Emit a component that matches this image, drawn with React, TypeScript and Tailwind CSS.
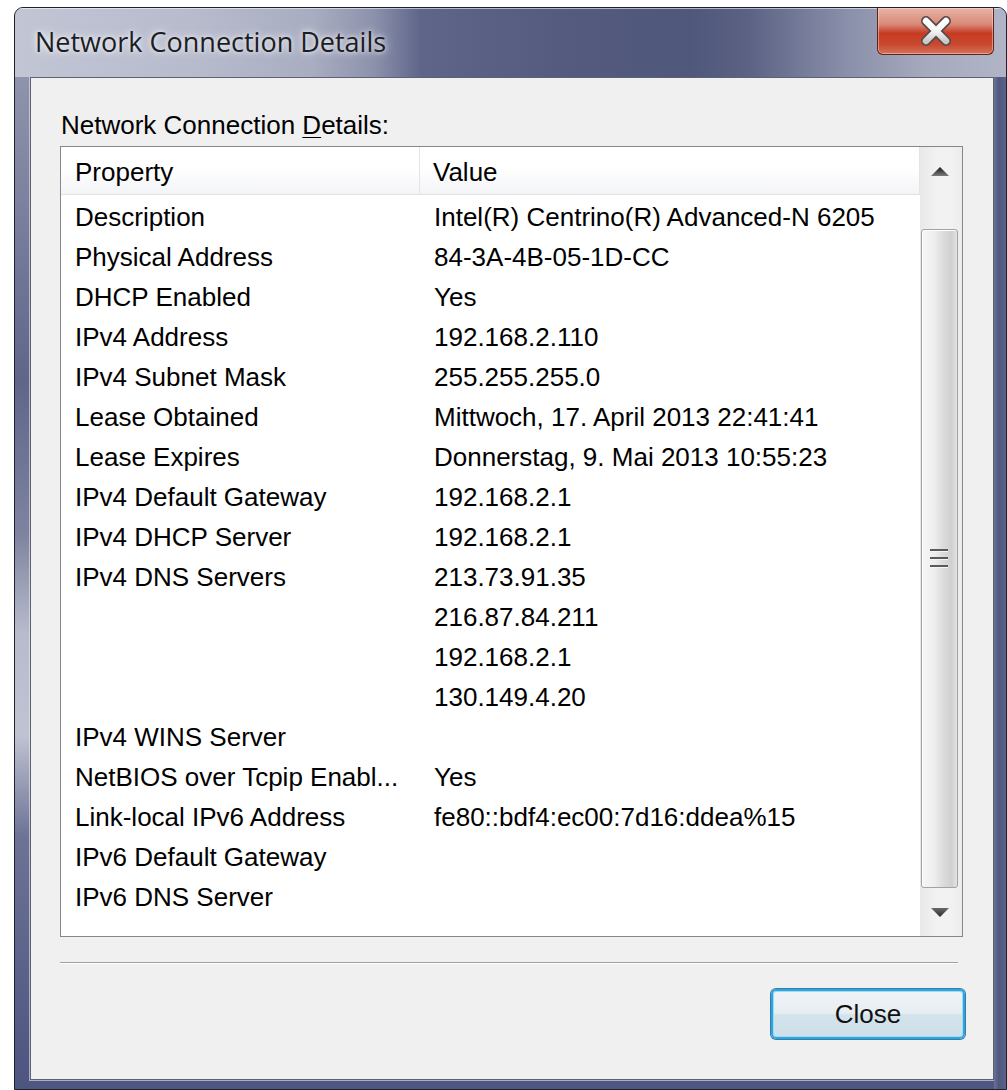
import React from "react";

const rows: [string, string][] = [
  ["Description", "Intel(R) Centrino(R) Advanced-N 6205"],
  ["Physical Address", "84-3A-4B-05-1D-CC"],
  ["DHCP Enabled", "Yes"],
  ["IPv4 Address", "192.168.2.110"],
  ["IPv4 Subnet Mask", "255.255.255.0"],
  ["Lease Obtained", "Mittwoch, 17. April 2013 22:41:41"],
  ["Lease Expires", "Donnerstag, 9. Mai 2013 10:55:23"],
  ["IPv4 Default Gateway", "192.168.2.1"],
  ["IPv4 DHCP Server", "192.168.2.1"],
  ["IPv4 DNS Servers", "213.73.91.35"],
  ["", "216.87.84.211"],
  ["", "192.168.2.1"],
  ["", "130.149.4.20"],
  ["IPv4 WINS Server", ""],
  ["NetBIOS over Tcpip Enabl...", "Yes"],
  ["Link-local IPv6 Address", "fe80::bdf4:ec00:7d16:ddea%15"],
  ["IPv6 Default Gateway", ""],
  ["IPv6 DNS Server", ""],
];

function CloseGlyph() {
  return (
    <svg width="34" height="30" viewBox="0 0 34 30">
      <defs>
        <linearGradient id="xg" x1="0" y1="0" x2="0" y2="1">
          <stop offset="0" stopColor="#ffffff" />
          <stop offset="0.55" stopColor="#f2f2f2" />
          <stop offset="1" stopColor="#c9c9c9" />
        </linearGradient>
      </defs>
      <path d="M7 5 L27 25 M27 5 L7 25" stroke="#5a4a48" strokeWidth="10" strokeLinecap="round" />
      <path d="M7 5 L27 25 M27 5 L7 25" stroke="url(#xg)" strokeWidth="6.5" strokeLinecap="round" />
    </svg>
  );
}

function Arrow({ up }: { up: boolean }) {
  return (
    <svg width="18" height="9" viewBox="0 0 18 9">
      <defs>
        <linearGradient id={up ? "au" : "ad"} x1="0" y1="0" x2="0" y2="1">
          <stop offset="0" stopColor={up ? "#1a1a1a" : "#6a6a6a"} />
          <stop offset="1" stopColor={up ? "#7a7a7a" : "#2a2a2a"} />
        </linearGradient>
      </defs>
      {up ? (
        <polygon points="9,0 18,9 0,9" fill="url(#au)" />
      ) : (
        <polygon points="0,0 18,0 9,9" fill="url(#ad)" />
      )}
    </svg>
  );
}

function ScrollBar() {
  return (
    <div className="flex w-[42px] flex-col bg-[linear-gradient(to_right,#e8e8e8,#f2f2f2_40%,#f2f2f2_70%,#ececec)]">
      <div className="flex h-[48px] items-center justify-center pr-[2px]">
        <Arrow up />
      </div>
      <div className="flex flex-1 flex-col pt-[34px] pl-[1px]">
        <div className="flex flex-1 w-[37px] items-center justify-center rounded-[3px] border border-[#a3a3a3] bg-[linear-gradient(to_right,#f6f6f6,#eeeeee_35%,#dcdcdc_60%,#d0d0d0_85%,#e4e4e4)] shadow-[inset_1px_1px_0_#ffffff]">
          <div className="flex flex-col gap-[5px] pr-[2px]">
            <div className="h-[3px] w-[18px] border-t-2 border-[#5a5a5a] bg-[#f4f4f4]" />
            <div className="h-[3px] w-[18px] border-t-2 border-[#5a5a5a] bg-[#f4f4f4]" />
            <div className="h-[3px] w-[18px] border-t-2 border-[#5a5a5a] bg-[#f4f4f4]" />
          </div>
        </div>
      </div>
      <div className="flex h-[48px] items-center justify-center pr-[2px]">
        <Arrow up={false} />
      </div>
    </div>
  );
}

function DetailsList() {
  return (
    <div className="flex h-[791px] w-[903px] border border-[#828790] bg-white font-['Liberation_Sans',Arial,sans-serif] text-[26px] text-black">
      <div className="flex flex-1 flex-col">
        <div className="flex h-[48px] border-b border-[#e2e3e5] bg-[linear-gradient(to_bottom,#ffffff,#ffffff_45%,#f3f4f6)]">
          <div className="w-[359px] border-r border-[#e3e4e6] pl-[14px] pt-[10px] leading-[30px]">Property</div>
          <div className="flex-1 border-r border-[#e3e4e6] pl-[13px] pt-[10px] leading-[30px]">Value</div>
        </div>
        <div className="flex flex-col pt-[2px]">
          {rows.map(([k, v], i) => (
            <div key={i} className="flex h-[40px] leading-[40px]">
              <div className="w-[359px] whitespace-nowrap pl-[14px]">{k}</div>
              <div className="flex-1 whitespace-nowrap pl-[14px]">{v}</div>
            </div>
          ))}
        </div>
      </div>
      <ScrollBar />
    </div>
  );
}

export default function App() {
  return (
    <div className="h-[1090px] w-[1007px] overflow-hidden bg-white pl-[14px] pt-[7px]">
      <div className="flex h-[1083px] w-[993px] flex-col overflow-hidden rounded-t-[9px] border border-[#1d2130] bg-[#4f5780]">
        {/* caption */}
        <div className="relative flex h-[69px] shrink-0 bg-[linear-gradient(to_right,#c2c5d4_0%,#b7bbcc_18%,#a9adc1_30%,#8e93ad_36%,#5e6588_41%,#545b7e_55%,#4f577a_68%,#5b6284_74%,#8a90aa_84%,#a6aabe_92%,#b0b4c6_100%)] shadow-[inset_0_1px_0_rgba(255,255,255,0.55)]">
          <div className="pl-[20px] pt-[17px] font-['Open_Sans','Noto_Sans',sans-serif] text-[27px] leading-[34px] text-[#1b1d24] [text-shadow:0_0_10px_rgba(255,255,255,0.9),0_0_4px_rgba(255,255,255,0.7)]">
            Network Connection Details
          </div>
          <div className="ml-auto mr-[12px] flex h-[47px] w-[117px] items-center justify-center rounded-b-[6px] border border-t-0 border-[#5b231c] bg-[linear-gradient(to_bottom,#e9b3a6_0%,#d98b78_35%,#c73a22_55%,#c84a30_80%,#d7715c_100%)] shadow-[inset_0_0_0_1px_rgba(255,230,220,0.45)]">
            <CloseGlyph />
          </div>
        </div>
        <div className="flex flex-1">
          {/* left frame */}
          <div className="w-[15px] bg-[linear-gradient(to_bottom,#8f94ad_0%,#5f6689_30%,#7d839f_45%,#b7bbcb_55%,#c0c3d2_65%,#6d7395_75%,#4c5480_100%)]" />
          {/* client */}
          <div className="flex h-[1003px] w-[964px] flex-col border border-[#5e6170] bg-[#f0f0f0] pl-[29px] shadow-[0_0_0_1px_rgba(230,232,240,0.6)]">
            <div className="mt-[32px] ml-[1px] h-[30px] font-['Liberation_Sans',Arial,sans-serif] text-[26px] leading-[30px] text-black">
              Network Connection <span className="underline decoration-1 underline-offset-[3px]">D</span>etails:
            </div>
            <div className="mt-[6px]">
              <DetailsList />
            </div>
            <div className="mt-[25px] h-[2px] w-[898px] border-t border-[#a0a0a0] bg-white" />
            <div className="ml-[711px] mt-[25px] flex h-[50px] w-[194px] items-center justify-center rounded-[5px] border-2 border-[#2fa5e0] bg-[linear-gradient(to_bottom,#eef3f6_0%,#e7eef2_48%,#d3e3eb_52%,#cddfe8_100%)] font-['Liberation_Sans',Arial,sans-serif] text-[26px] text-[#111] shadow-[0_0_0_1px_#3a78a8,inset_0_0_0_1px_#9fdcf8]">
              Close
            </div>
          </div>
          {/* right frame */}
          <div className="flex-1 bg-[linear-gradient(to_right,#6b7196,#4f5780_40%,#5c6389)]" />
        </div>
      </div>
    </div>
  );
}
